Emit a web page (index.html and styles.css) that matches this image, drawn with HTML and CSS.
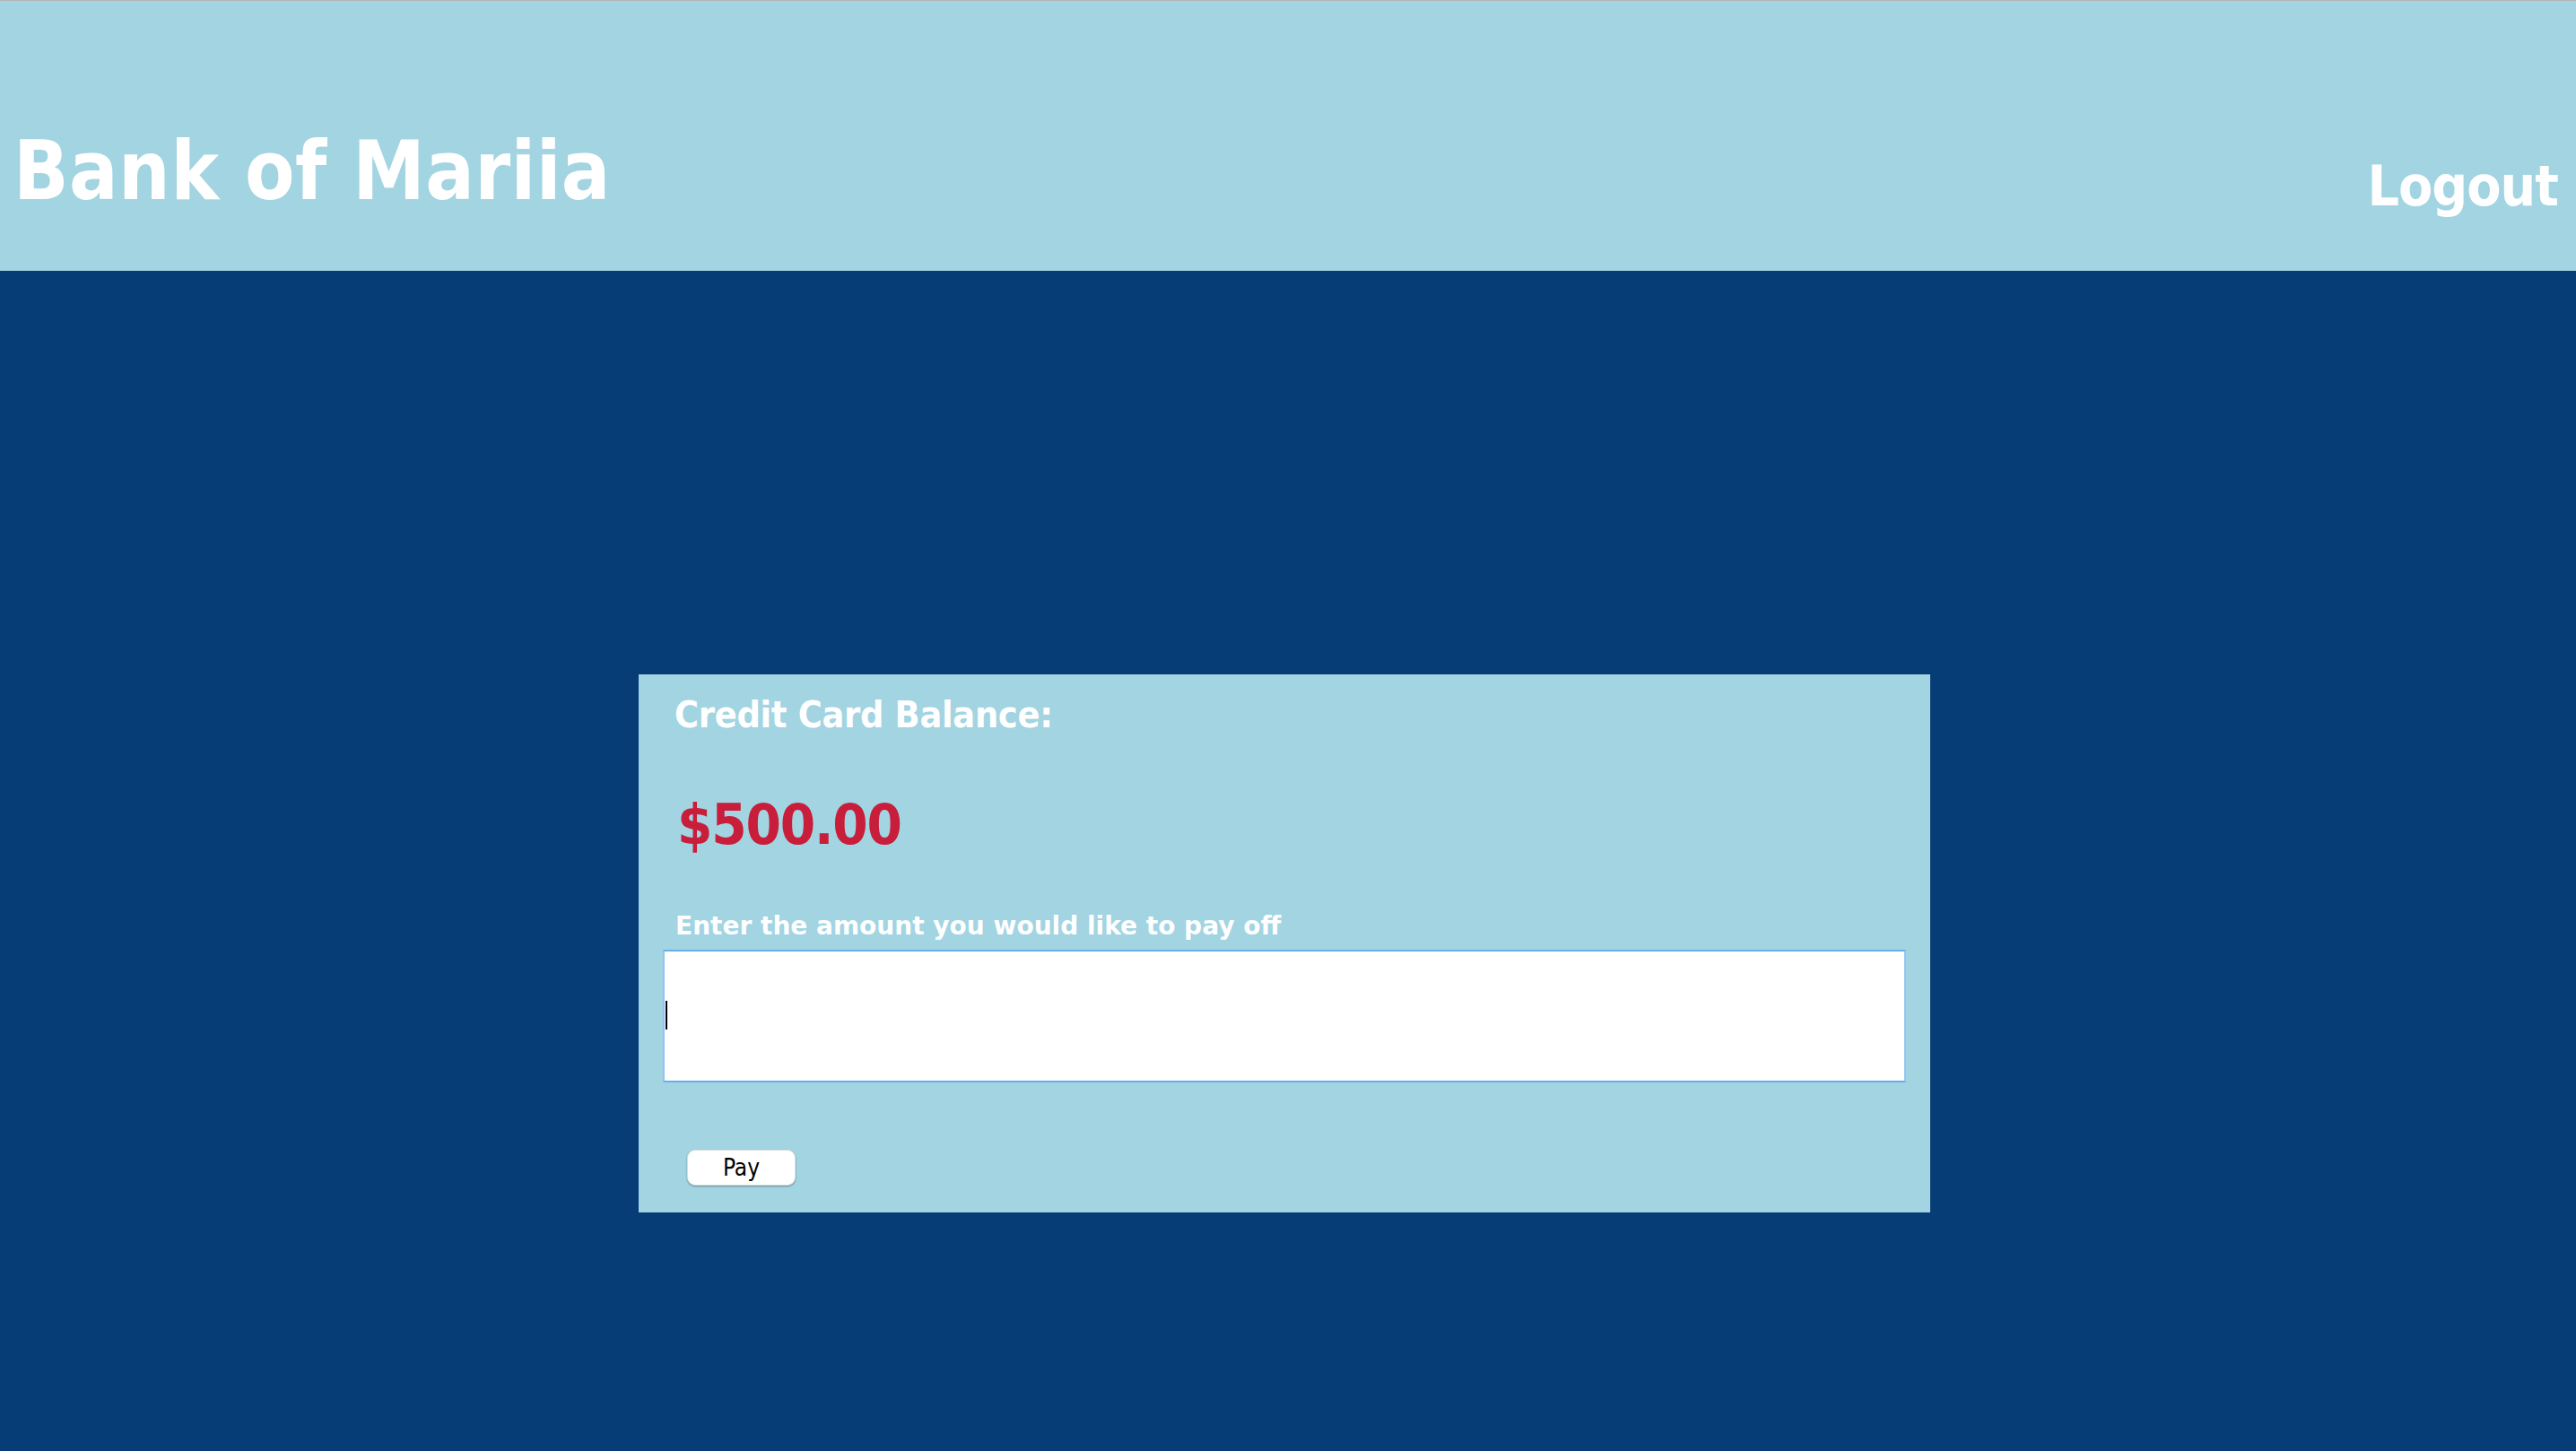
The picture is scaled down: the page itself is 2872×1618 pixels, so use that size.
FILE: index.html
```html
<!DOCTYPE html>
<html lang="en">
<head>
<meta charset="utf-8">
<title>Bank of Mariia</title>
<link rel="stylesheet" href="styles.css">
</head>
<body>
<header class="topbar">
  <h1 class="brand">Bank of Mariia</h1>
  <a class="logout" href="#">Logout</a>
</header>
<main class="main">
  <section class="card">
    <h2 class="card-title">Credit Card Balance:</h2>
    <p class="balance">$500.00</p>
    <label class="field-label" for="amount">Enter the amount you would like to pay off</label>
    <div class="field">
      <input class="field-input" id="amount" type="text">
      <span class="caret"></span>
    </div>
    <button class="pay-btn" type="button">Pay</button>
  </section>
</main>
</body>
</html>
```

FILE: styles.css
```css
* {
  box-sizing: border-box;
}

html, body {
  margin: 0;
  padding: 0;
}

body {
  background: #063d77;
  border-top: 1px solid #b4b4b4;
  font-family: "DejaVu Sans Condensed", "DejaVu Sans", sans-serif;
  min-height: 1618px;
}

.topbar {
  height: 301px;
  background: #a2d4e2;
  display: flex;
  justify-content: space-between;
  align-items: flex-start;
  padding: 0 20px 0 15px;
}

.brand {
  margin: 145px 0 0;
  font-size: 90px;
  line-height: 1;
  font-weight: bold;
  letter-spacing: 0.4px;
  color: #ffffff;
}

.logout {
  margin-top: 176px;
  font-size: 62px;
  line-height: 1;
  font-weight: bold;
  letter-spacing: -1px;
  color: #ffffff;
  text-decoration: none;
}

.main {
  padding: 450px 8px 0 0;
}

.card {
  width: 1440px;
  height: 600px;
  margin: 0 auto;
  background: #a2d4e2;
  padding: 25px 27px 30px;
  display: flex;
  flex-direction: column;
  align-items: flex-start;
}

.card-title {
  margin: 0 0 0 13px;
  font-size: 41px;
  line-height: 1;
  font-weight: bold;
  letter-spacing: -0.3px;
  color: #ffffff;
}

.balance {
  margin: 70px 0 0 16px;
  font-size: 63px;
  line-height: 1;
  font-weight: bold;
  letter-spacing: -1.2px;
  color: #c81e3b;
}

.field-label {
  margin: 68px 0 0 14px;
  font-family: "DejaVu Sans", sans-serif;
  font-size: 28px;
  line-height: 1;
  font-weight: bold;
  color: #ffffff;
}

.field {
  position: relative;
  margin-top: 12px;
  width: 1386px;
  height: 148px;
}

.field-input {
  display: block;
  width: 100%;
  height: 100%;
  margin: 0;
  padding: 0 2px;
  background: #ffffff;
  border-style: solid;
  border-color: #6aaee8 #92c4f2 #6aaee8 #92c4f2;
  border-width: 2px;
  outline: none;
  font-family: inherit;
  font-size: 28px;
  caret-color: transparent;
}

.caret {
  position: absolute;
  left: 3px;
  top: 57px;
  width: 2px;
  height: 32px;
  background: #000000;
}

.pay-btn {
  margin: 75px 0 0 27px;
  width: 121px;
  height: 40px;
  padding: 0;
  background: #ffffff;
  border: 1px solid #d6dde0;
  border-radius: 9px;
  box-shadow: 0 1px 2px rgba(0, 0, 0, 0.35);
  font-family: "DejaVu Sans Condensed", "DejaVu Sans", sans-serif;
  font-size: 26px;
  line-height: 1;
  color: #000000;
}
```
